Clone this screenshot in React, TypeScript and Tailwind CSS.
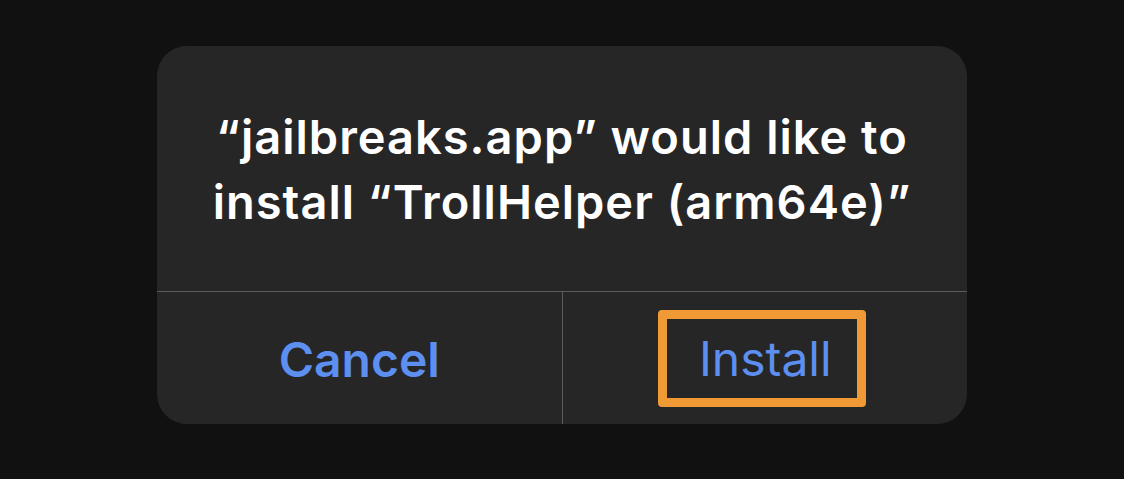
import React from 'react';

export default function App() {
  return (
    <div className="w-[1124px] h-[479px] bg-[#111111] pt-[46px] pl-[157px]" style={{ fontFamily: 'Inter, "Noto Sans", sans-serif' }}>
      <div className="w-[810px] h-[378px] rounded-[30px] bg-[#262626] flex flex-col overflow-hidden">
        {/* Message */}
        <div className="h-[246px] flex items-center justify-center border-b border-[#5c5c5c]">
          <p className="text-center text-white font-semibold text-[47px] leading-[65px] tracking-[1px]">
            “jailbreaks.app” would like to
            <br />
            install “TrollHelper (arm64e)”
          </p>
        </div>

        {/* Actions */}
        <div className="flex-1 flex">
          <button className="flex-1 flex items-center justify-center text-[#5c8ff0] font-semibold text-[48px] border-r border-[#5c5c5c] pt-[4px]">
            Cancel
          </button>
          <div className="flex-1 flex items-center justify-center">
            <button className="w-[208px] h-[97px] mr-[5px] flex items-center justify-center rounded-[4px] border-[9px] border-[#f09a36] text-[#5c8ff0] text-[48px] font-normal pt-[2px] pl-[6px]">
              Install
            </button>
          </div>
        </div>
      </div>
    </div>
  );
}
